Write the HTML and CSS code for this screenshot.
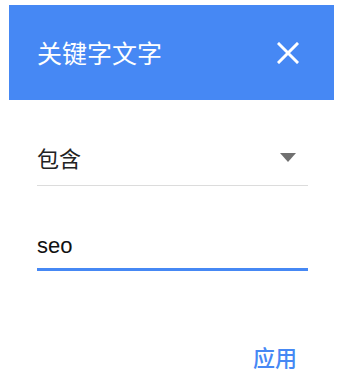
FILE: index.html
```html
<!DOCTYPE html>
<html lang="zh-CN">
<head>
<meta charset="utf-8">
<link rel="stylesheet" href="styles.css">
</head>
<body>
<div class="dialog">
  <div class="header">
    <span class="title">关键字文字</span>
    <svg class="close" width="22" height="22" viewBox="0 0 22 22"><path d="M2 2 L20 20 M20 2 L2 20" stroke="#fff" stroke-width="3" stroke-linecap="square" fill="none"/></svg>
  </div>
  <div class="content">
    <div class="select">
      <span class="select-text">包含</span>
      <span class="arrow"></span>
    </div>
    <div class="input">seo</div>
  </div>
  <div class="actions">
    <span class="apply">应用</span>
  </div>
</div>
</body>
</html>
```
FILE: styles.css
```css
html, body {
  margin: 0;
  padding: 0;
  background: #fff;
}
body {
  font-family: "Liberation Sans", "Noto Sans CJK SC", sans-serif;
}
.dialog {
  margin: 5px 5px 0 9px;
  border-top: 1px solid #e4e8ee;
}
.header {
  background: #4688f4;
  height: 95px;
  display: flex;
  align-items: center;
  justify-content: space-between;
  padding: 0 35px 0 28px;
  box-sizing: border-box;
  margin-top: -1px;
}
.title {
  color: #fff;
  font-size: 25px;
  font-family: "Noto Sans CJK SC", sans-serif;
  font-weight: 400;
  margin-top: -2px;
}
.close {
  display: block;
}
.content {
  padding: 0 26px 0 28px;
}
.select {
  display: flex;
  align-items: center;
  justify-content: space-between;
  height: 48px;
  padding-bottom: 4px;
  margin-top: 33px;
  border-bottom: 1px solid #dcdcdc;
}
.select-text {
  font-size: 22px;
  font-family: "Noto Sans CJK SC", sans-serif;
  color: #222;
}
.arrow {
  width: 0;
  height: 0;
  border-left: 8px solid transparent;
  border-right: 8px solid transparent;
  border-top: 9px solid #707070;
  margin-right: 12px;
}
.input {
  margin-top: 44px;
  font-size: 22px;
  color: #111;
  line-height: 32px;
  border-bottom: 3px solid #4688f4;
  padding-bottom: 6px;
}
.actions {
  display: flex;
  justify-content: flex-end;
  padding: 0 37px 0 0;
  margin-top: 69px;
}
.apply {
  color: #4688f4;
  font-size: 22px;
  font-family: "Noto Sans CJK SC", sans-serif;
  font-weight: 500;
}
```
